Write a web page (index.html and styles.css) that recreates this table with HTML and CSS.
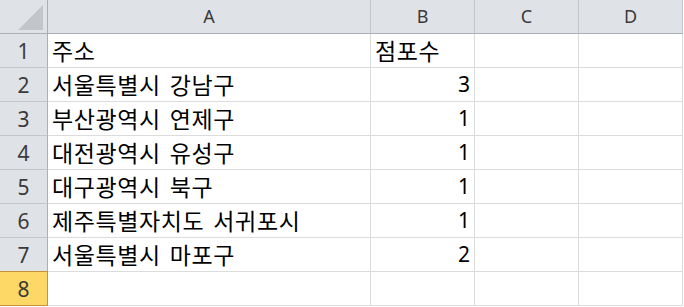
FILE: index.html
```
<!DOCTYPE html>
<html lang="ko">
<head>
<meta charset="utf-8">
<link rel="stylesheet" href="styles.css">
</head>
<body>
<div class="sheet">
  <div class="corner"><svg class="tri" width="48" height="34" viewBox="0 0 48 34"><polygon points="18,30 43,30 43,5" fill="#c2c5c9"/></svg></div>
  <div class="colhead">A</div>
  <div class="colhead">B</div>
  <div class="colhead">C</div>
  <div class="colhead">D</div>

  <div class="rowhead">1</div><div class="cell">주소</div><div class="cell">점포수</div><div class="cell"></div><div class="cell"></div>
  <div class="rowhead">2</div><div class="cell">서울특별시 강남구</div><div class="cell num">3</div><div class="cell"></div><div class="cell"></div>
  <div class="rowhead">3</div><div class="cell">부산광역시 연제구</div><div class="cell num">1</div><div class="cell"></div><div class="cell"></div>
  <div class="rowhead">4</div><div class="cell">대전광역시 유성구</div><div class="cell num">1</div><div class="cell"></div><div class="cell"></div>
  <div class="rowhead">5</div><div class="cell">대구광역시 북구</div><div class="cell num">1</div><div class="cell"></div><div class="cell"></div>
  <div class="rowhead">6</div><div class="cell">제주특별자치도 서귀포시</div><div class="cell num">1</div><div class="cell"></div><div class="cell"></div>
  <div class="rowhead">7</div><div class="cell">서울특별시 마포구</div><div class="cell num">2</div><div class="cell"></div><div class="cell"></div>
  <div class="rowhead sel">8</div><div class="cell"></div><div class="cell"></div><div class="cell"></div><div class="cell"></div>
</div>
</body>
</html>
```
FILE: styles.css
```
html, body {
  margin: 0;
  padding: 0;
  background: #ffffff;
}
.sheet {
  display: grid;
  grid-template-columns: 48px 323px 104px 104px 104px;
  grid-auto-rows: 34px;
  font-family: "Noto Sans", "Noto Sans CJK KR", sans-serif;
}
.corner, .colhead, .rowhead {
  background: #dfe3e8;
  box-sizing: border-box;
}
.corner {
  border-right: 1px solid #abaeb3;
  border-bottom: 1px solid #abaeb3;
  position: relative;
}
.tri {
  position: absolute;
  left: 0;
  top: 0;
}
.colhead {
  border-right: 1px solid #c3c6ca;
  border-bottom: 1px solid #abaeb3;
  display: flex;
  align-items: center;
  justify-content: center;
  font-size: 18px;
  color: #3a3a3a;
  padding-bottom: 2px;
}
.rowhead {
  border-right: 1px solid #abaeb3;
  border-bottom: 1px solid #c3c6ca;
  display: flex;
  align-items: center;
  justify-content: center;
  font-size: 21px;
  color: #3a3a3a;
}
.rowhead.sel {
  background: #fdd866;
  border: 1px solid #c8923a;
  border-left: none;
  margin-top: -1px;
  height: 35px;
}
.cell {
  box-sizing: border-box;
  border-right: 1px solid #dadcdd;
  border-bottom: 1px solid #dadcdd;
  display: flex;
  align-items: center;
  padding: 0 4px 1px 4px;
  font-family: "Noto Sans CJK KR", sans-serif;
  font-size: 23px;
  letter-spacing: 0.6px;
  word-spacing: 2px;
  color: #000000;
  white-space: nowrap;
}
.cell.num {
  justify-content: flex-end;
  font-family: "Noto Sans", "Noto Sans CJK KR", sans-serif;
  font-size: 21px;
  letter-spacing: 0;
}
```
